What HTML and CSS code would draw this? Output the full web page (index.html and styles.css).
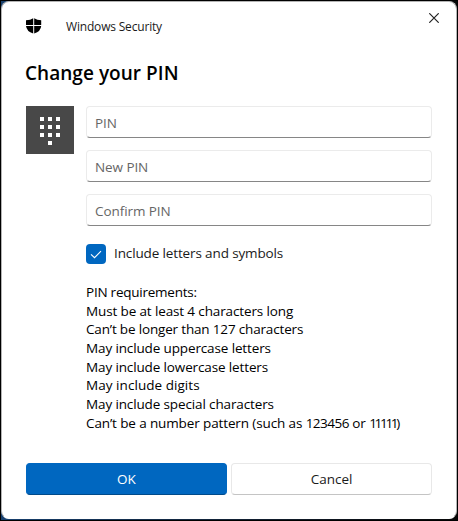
FILE: index.html
```html
<!DOCTYPE html>
<html lang="en">
<head>
  <meta charset="UTF-8" />
  <meta name="viewport" content="width=device-width, initial-scale=1.0" />
  <title>Windows Security</title>
  <link rel="stylesheet" href="styles.css">
</head>
<body>

  <div class="dialog">
    <header class="title-bar">
      <svg class="shield" width="16" height="16" viewBox="0 0 16 16">
        <path d="M0 2.3 Q4.5 2.3 7.2 .3 V7 H0 Z M8.2 .3 Q11 2.3 15.2 2.3 V7 H8.2 Z M0 8 H7.2 V15.6 Q.6 13.4 0 8 Z M8.2 8 H15.2 Q14.8 13.4 8.2 15.6 Z" />
      </svg>
      <span class="app-name">Windows Security</span>
      <button class="close-btn" aria-label="Close">
        <svg width="10" height="10" viewBox="0 0 10 10">
          <path d="M.3 .3 L9.7 9.7 M9.7 .3 L.3 9.7" />
        </svg>
      </button>
    </header>

    <h1>Change your PIN</h1>

    <div class="content">
      <svg class="keypad" width="48" height="48" viewBox="0 0 48 48">
        <path d="M14 11h4v4h-4z M22 11h4v4h-4z M30 11h4v4h-4z M14 19h4v4h-4z M22 19h4v4h-4z M30 19h4v4h-4z M14 27h4v4h-4z M22 27h4v4h-4z M30 27h4v4h-4z M22 35h4v4h-4z" />
      </svg>

      <form class="fields">
        <input type="password" class="pin" placeholder="PIN" />
        <input type="password" class="new-pin" placeholder="New PIN" />
        <input type="password" class="confirm-pin" placeholder="Confirm PIN" />

        <label class="checkbox">
          <span class="box">
            <svg width="20" height="20" viewBox="0 0 20 20">
              <path d="M5 10.4 L8.5 13.7 L15 7.2" />
            </svg>
          </span>
          <span class="checkbox-text">Include letters and symbols</span>
        </label>

        <div class="requirements">
          <p class="req-title">PIN requirements:</p>
          <p>Must be at least 4 characters long</p>
          <p class="req-max">Can’t be longer than 127 characters</p>
          <p>May include uppercase letters</p>
          <p>May include lowercase letters</p>
          <p class="req-digits">May include digits</p>
          <p>May include special characters</p>
          <p class="req-pattern">Can’t be a number pattern (such as <span class="sequence">123456</span> or <span class="repeat">11111</span>)</p>
        </div>
      </form>
    </div>

    <footer class="actions">
      <button class="btn btn-primary">OK</button>
      <button class="btn">Cancel</button>
    </footer>
  </div>

</body>
</html>
```

FILE: styles.css
```css
* {
  box-sizing: border-box;
}
body {
  margin: 0;
  height: 521px;
  border: 1px solid #000;
  background: linear-gradient(to right, #17406e, #111c2b 60%, #080808);
  font-family: "Open Sans", "Noto Sans", sans-serif;
  font-size: 13.5px;
  color: #1a1a1a;
  overflow: hidden;
}
.dialog {
  width: 456px;
  height: 518px;
  background: #fff;
  border: 1px solid #b4b4b4;
  border-bottom-color: #fff;
  border-radius: 8px;
}

/* Title bar */
.title-bar {
  display: flex;
  align-items: flex-start;
  height: 54px;
  padding: 11px 17px 0 24px;
}
.shield {
  margin-top: 5px;
  fill: #000;
}
.app-name {
  margin: 5px 0 0 24px;
  font-size: 12px;
  line-height: 18px;
  letter-spacing: -0.18px;
  color: #1a1a1a;
}
.close-btn {
  display: flex;
  margin-left: auto;
  padding: 0;
  border: none;
  background: none;
}
.close-btn svg {
  fill: none;
  stroke: #222;
  stroke-width: 1.2;
}

h1 {
  margin: 0 0 0 23px;
  height: 50px;
  font-size: 19px;
  font-weight: 600;
  line-height: 34px;
  letter-spacing: 0.04px;
  color: #000;
}

.content {
  display: flex;
  gap: 12px;
  height: 357px;
  padding: 0 24px;
}
.keypad {
  background: #484848;
  fill: #fff;
}
.fields {
  width: 346px;
}

input {
  display: block;
  width: 346px;
  height: 32px;
  margin: 0 0 12px;
  padding: 2px 8px 0;
  border: 1px solid #ebebeb;
  border-bottom-color: #868686;
  border-radius: 4px;
  background: #fff;
  font: inherit;
  letter-spacing: -0.08px;
}
input::placeholder {
  color: #666;
  opacity: 1;
}

.checkbox {
  display: flex;
  gap: 8px;
  height: 20px;
  margin-top: 18px;
  line-height: 19px;
  letter-spacing: -0.13px;
  white-space: nowrap;
}
.box {
  width: 20px;
  height: 20px;
  border-radius: 4px;
  background: #0067c0;
}
.box svg {
  display: block;
  fill: none;
  stroke: #fff;
  stroke-width: 1.1;
}

.requirements {
  margin-top: 19px;
  line-height: 18.65px;
  letter-spacing: -0.13px;
  white-space: nowrap;
  color: #000;
}
.requirements p {
  width: fit-content;
  margin: 0;
}
.requirements .req-title {
  letter-spacing: -0.24px;
}
.requirements .req-max {
  letter-spacing: -0.17px;
}
.requirements .req-digits {
  letter-spacing: 0.05px;
}
.requirements .req-pattern {
  letter-spacing: -0.12px;
}
.requirements .sequence {
  letter-spacing: -0.5px;
}
.requirements .repeat {
  letter-spacing: -2.3px;
}

/* Buttons */
.actions {
  display: flex;
  gap: 4px;
  padding: 0 24px;
}
.btn {
  width: 201px;
  height: 32px;
  padding: 0;
  border: 1px solid #e8e8e8;
  border-bottom-color: #c4c4c4;
  border-radius: 4px;
  background: #fff;
  color: #1a1a1a;
  font: inherit;
}
.btn-primary {
  border-color: #0067c0;
  border-bottom-color: #004a8a;
  background: #0067c0;
  color: #fff;
}
```
